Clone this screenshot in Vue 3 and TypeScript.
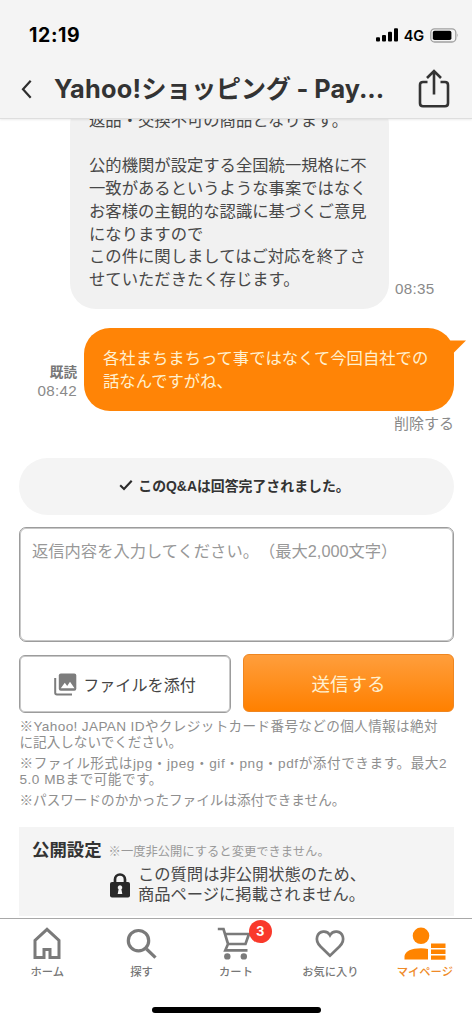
<script setup lang="ts">
interface NavItem {
  id: string
  label: string
  active?: boolean
  badge?: number
}

const answerLines: string[] = [
  '返品・交換不可の商品となります。',
  '',
  '公的機関が設定する全国統一規格に不',
  '一致があるというような事案ではなく',
  'お客様の主観的な認識に基づくご意見',
  'になりますので',
  'この件に関しましてはご対応を終了さ',
  'せていただきたく存じます。',
]

const replyLines: string[] = ['各社まちまちって事ではなくて今回自社での', '話なんですがね、']

const notes: string[][] = [
  ['※Yahoo! JAPAN IDやクレジットカード番号などの個人情報は絶対', 'に記入しないでください。'],
  ['※ファイル形式はjpg・jpeg・gif・png・pdfが添付できます。最大2', '5.0 MBまで可能です。'],
  ['※パスワードのかかったファイルは添付できません。'],
]

const navItems: NavItem[] = [
  { id: 'home', label: 'ホーム' },
  { id: 'search', label: '探す' },
  { id: 'cart', label: 'カート', badge: 3 },
  { id: 'favorite', label: 'お気に入り' },
  { id: 'mypage', label: 'マイページ', active: true },
]
</script>

<template>
  <div class="screen">
    <header class="header">
      <div class="status">
        <span class="clock">12:19</span>
        <div class="status-right">
          <svg class="signal" width="22" height="14" viewBox="0 0 22 14">
            <rect x="0" y="9.2" width="4" height="4.3" rx="1" />
            <rect x="6" y="7" width="4" height="6.5" rx="1" />
            <rect x="12" y="3.8" width="4" height="9.7" rx="1" />
            <rect x="18" y="0.3" width="4" height="13.2" rx="1" />
          </svg>
          <span class="network">4G</span>
          <svg class="battery" width="29" height="15" viewBox="0 0 29 15">
            <rect x="0.8" y="0.8" width="25" height="13.2" rx="3.8" fill="none" stroke="#a0a0a0" stroke-width="1.3" />
            <rect x="2.8" y="2.8" width="18.6" height="9.2" rx="1.8" />
            <path d="M27.3 5.2q1.7 2.2 0 4.4z" fill="#a0a0a0" />
          </svg>
        </div>
      </div>
      <div class="titlebar">
        <svg class="back" width="12" height="20" viewBox="0 0 12 20">
          <path d="M9.7 1.7 2 10.2l7.7 8.5" fill="none" stroke="#2e2e2e" stroke-width="2.2" />
        </svg>
        <h1 class="title"><span class="t-latin">Yahoo!</span><span class="t-kana">ショッピング</span><span class="t-tail"> - Pay...</span></h1>
        <svg class="share" width="32" height="40" viewBox="0 0 32 40">
          <g fill="none" stroke="#333" stroke-width="2.6">
            <path d="M9.5 13H5Q2 13 2 16V34.300q0 3 3 3H27q3 0 3-3V16q0-3-3-3h-4.500" />
            <path d="M16 25.500V2.500M9 9l7-7 7 7" />
          </g>
        </svg>
      </div>
    </header>

    <main class="content">
      <div class="row answer-row">
        <div class="bubble answer">
          <p v-for="(line, i) in answerLines" :key="i">{{ line }}</p>
        </div>
        <time class="time">08:35</time>
      </div>

      <div class="row reply-row">
        <div class="meta">
          <b>既読</b>
          <time class="time">08:42</time>
        </div>
        <div class="bubble reply">
          <p v-for="line in replyLines" :key="line">{{ line }}</p>
          <svg class="tail" width="20" height="15" viewBox="0 0 20 15"><path d="M0 .6H19L6.500 13 4 15z" /></svg>
        </div>
      </div>
      <div class="delete">削除する</div>

      <div class="done">
        <svg width="14" height="12" viewBox="0 0 14 12">
          <path d="M1.200 6.300 5 10 12.700 1.700" fill="none" stroke="#2b2b2b" stroke-width="2.1" />
        </svg>
        <span>このQ&amp;Aは回答完了されました。</span>
      </div>

      <div class="input">返信内容を入力してください。（最大2,000文字）</div>

      <div class="actions">
        <button class="btn attach">
          <svg width="23" height="23" viewBox="0 0 23 23">
            <path d="M1.200 5V19.800q0 1.700 1.700 1.700H18" fill="none" stroke="#7d7d7d" stroke-width="2" />
            <rect x="4.800" y="0.500" width="17.500" height="17.300" rx="2" fill="#7d7d7d" />
            <path d="M6.800 15.200 10.800 9.800 13.200 13 16 8.700 20.500 15.200z" fill="#fff" />
          </svg>
          <span>ファイルを添付</span>
        </button>
        <button class="btn send">送信する</button>
      </div>

      <div class="notes">
        <div v-for="(note, i) in notes" :key="i" class="note">
          <p v-for="(line, j) in note" :key="j" :class="`n${i}${j}`">{{ line }}</p>
        </div>
      </div>

      <section class="privacy">
        <div class="privacy-head">
          <h2>公開設定</h2>
          <small>※一度非公開にすると変更できません。</small>
        </div>
        <div class="privacy-body">
          <svg width="20" height="25" viewBox="0 0 20 25">
            <path d="M5 11V6.500a5 5 0 0 1 10 0V11" fill="none" stroke="#282828" stroke-width="2.700" />
            <rect x="0" y="9" width="20" height="15.500" rx="2" fill="#282828" />
            <path d="M10 12.200a2.300 2.300 0 0 1 1.400 4.100L12.300 21H7.700L8.600 16.300A2.300 2.300 0 0 1 10 12.200z" fill="#f4f4f4" />
          </svg>
          <div>
            <p>この質問は非公開状態のため、</p>
            <p>商品ページに掲載されません。</p>
          </div>
        </div>
      </section>
    </main>

    <nav class="nav">
      <div v-for="item in navItems" :key="item.id" class="nav-item" :class="{ active: item.active }">
        <svg v-if="item.id === 'home'" width="44" height="36" viewBox="0 0 44 36">
          <path d="M10 32.500V15.500L22 4.300 34 15.500V32.500H25V24.500H19V32.500Z" fill="none" stroke="#7a7a7a" stroke-width="3" />
        </svg>
        <svg v-else-if="item.id === 'search'" width="44" height="36" viewBox="0 0 44 36">
          <g fill="none" stroke="#7a7a7a" stroke-width="3.200">
            <circle cx="18.500" cy="15.700" r="10.200" />
            <path d="m26.500 24 9 8.700" />
          </g>
        </svg>
        <svg v-else-if="item.id === 'cart'" width="44" height="36" viewBox="0 0 44 36">
          <g fill="none" stroke="#7a7a7a" stroke-width="2.700">
            <path d="M3.800 4H9.500L14.500 20.500M11 9H35L31.500 19H14L11.300 25.300H33.500" />
          </g>
          <circle cx="13.300" cy="31.400" r="3.200" fill="#7a7a7a" />
          <circle cx="29.800" cy="31.400" r="3.200" fill="#7a7a7a" />
        </svg>
        <svg v-else-if="item.id === 'favorite'" width="44" height="36" viewBox="0 0 44 36">
          <path
            d="M22 30.700 12.500 21.500C8.800 17.800 8.500 14 9.200 11.600 11 5.500 19 4.800 22 10.200 25 4.800 33 5.500 34.800 11.600 35.500 14 35.200 17.800 31.500 21.500Z"
            fill="none" stroke="#7a7a7a" stroke-width="2.700"
          />
        </svg>
        <svg v-else width="44" height="36" viewBox="0 0 44 36">
          <g fill="#ff8400">
            <circle cx="18" cy="10.800" r="8.300" />
            <path d="M1.500 34.500V31Q3 23.500 18 23.200q4 0 7 .8V34.500Z" />
            <rect x="28" y="18.500" width="14.500" height="4.500" />
            <rect x="28" y="24.500" width="14.500" height="4.500" />
            <rect x="28" y="30.500" width="14.500" height="4.200" />
          </g>
        </svg>
        <span class="label">{{ item.label }}</span>
        <span v-if="item.badge" class="badge">{{ item.badge }}</span>
      </div>
    </nav>
    <div class="home-indicator"></div>
  </div>
</template>

<style scoped>
.screen {
  width: 472px;
  height: 1024px;
  display: flex;
  flex-direction: column;
  overflow: hidden;
  background: #fff;
  color: #484848;
  font-family: "Liberation Sans", "Noto Sans CJK JP", sans-serif;
  white-space: nowrap;
  text-spacing-trim: space-all;
}
p, h1, h2 { margin: 0; }
svg { display: block; flex: none; }
.header {
  flex: none;
  box-sizing: border-box;
  height: 119px;
  background: #f4f4f4;
  border-bottom: 1px solid #dedede;
  box-shadow: 0 1px 2px rgba(0, 0, 0, 0.08);
  position: relative;
  z-index: 1;
}
.status {
  height: 60px;
  padding: 10px 13px 0 29px;
  box-sizing: border-box;
  display: flex;
  align-items: center;
  justify-content: space-between;
  color: #000;
  font-family: Inter, sans-serif;
}
.clock { font-size: 19.5px; font-weight: 700; letter-spacing: 0.6px; }
.status-right { display: flex; align-items: center; gap: 6px; }
.network { font-size: 14.5px; font-weight: 600; letter-spacing: -0.1px; }
.titlebar {
  height: 58px;
  display: flex;
  align-items: center;
  padding: 0 22px 0 21px;
}
.title {
  flex: 1;
  margin-left: 21px;
  font: 700 25.3px/40px Inter, "Noto Sans CJK JP", sans-serif;
  color: #333;
  white-space: pre;
}
.t-latin { letter-spacing: 0.2px; }
.t-kana { letter-spacing: -0.4px; }
.share { margin-top: -1px; }

.content { flex: none; height: 799px; overflow: hidden; }
.row { display: flex; align-items: flex-end; }
.bubble { box-sizing: border-box; font-size: 16.33px; line-height: 22.7px; }
.bubble p { min-height: 22.7px; }
.answer-row { margin-top: -20px; padding-left: 70px; gap: 6px; }
.answer {
  width: 319px;
  height: 210px;
  padding: 10px 19px 0;
  background: #f1f1f1;
  border-radius: 26px;
}
.time { font-size: 15.2px; line-height: 18px; color: #8a8a8a; letter-spacing: 0.3px; }
.answer-row .time { margin-bottom: 11px; }
.reply-row { margin-top: 19px; padding-left: 19px; align-items: center; }
.meta {
  width: 58px;
  margin-right: 7px;
  padding-top: 23px;
  text-align: right;
  display: flex;
  flex-direction: column;
}
.meta b { font-size: 13.6px; line-height: 19px; color: #777; }
.reply {
  position: relative;
  width: 370px;
  height: 83px;
  padding: 19px 19px 0;
  background: #ff8406;
  border-radius: 26px;
  color: #fff0cf;
}
.tail { position: absolute; left: 363px; top: 12px; fill: #ff8406; }
.delete {
  margin: 3px 18px 0 0;
  text-align: right;
  font-size: 15px;
  line-height: 19px;
  color: #8a8a8a;
}
.done {
  box-sizing: border-box;
  margin: 25px 18px 0 19px;
  height: 57px;
  padding: 0 4px 3px 0;
  border-radius: 29px;
  background: #f4f4f4;
  display: flex;
  align-items: center;
  justify-content: center;
  gap: 5px;
  font-size: 13.9px;
  font-weight: 700;
  color: #333;
}
.input {
  box-sizing: border-box;
  margin: 12px 18px 0 19px;
  height: 115px;
  padding: 12px 12px;
  border: 1px solid #9c9c9c;
  box-shadow: inset 0 0 0 1px #c8c8c8;
  border-radius: 7px;
  font-size: 16.3px;
  line-height: 22px;
  color: #989898;
}
.actions {
  margin: 12px 18px 0 19px;
  display: flex;
  align-items: flex-start;
  gap: 12px;
}
.btn {
  box-sizing: border-box;
  height: 58px;
  padding: 0;
  display: flex;
  align-items: center;
  justify-content: center;
  border-radius: 6px;
  font-family: inherit;
}
.attach {
  width: 212px;
  margin-top: 1px;
  gap: 6px;
  border: 1px solid #9c9c9c;
  box-shadow: inset 0 0 0 1px #c8c8c8;
  background: #fff;
  color: #444;
  font-size: 16.1px;
}
.send {
  width: 211px;
  border: 1px solid #ef8620;
  background: linear-gradient(#ff9e3c, #ff8000);
  color: #fff0cf;
  font-size: 18.5px;
}
.notes {
  margin: 6px 0 0 19.500px;
  font-size: 13.6px;
  line-height: 16.4px;
  color: #8e8e8e;
}
.note { margin-bottom: 4.2px; }
.n00 { letter-spacing: 0.36px; }
.n10 { letter-spacing: 0.58px; }
.n11 { letter-spacing: 0.5px; }
.privacy {
  margin: 18px 18px 0 19px;
  height: 89px;
  background: #f4f4f4;
  box-sizing: border-box;
  padding: 12px 13px 0;
}
.privacy-head { display: flex; align-items: center; gap: 7px; height: 22px; }
.privacy-head h2 { font-size: 17.4px; line-height: 22px; color: #333; }
.privacy-head small { font-size: 12.3px; line-height: 18px; color: #999; padding-top: 3px; }
.privacy-body {
  display: flex;
  align-items: center;
  gap: 8px;
  padding-left: 78px;
  margin-top: 4px;
  font-size: 16.3px;
  line-height: 19.4px;
}
.privacy-body svg { margin-top: 1px; }

.nav {
  flex: none;
  box-sizing: border-box;
  height: 87px;
  border-top: 1px solid #a8a8a8;
  display: flex;
  background: #fff;
}
.nav-item {
  flex: 1;
  position: relative;
  display: flex;
  flex-direction: column;
  align-items: center;
  padding-top: 6px;
  color: #777;
}
.nav-item svg { margin-bottom: 3px; }
.label { font-size: 11.3px; line-height: 16px; font-weight: 500; }
.nav-item.active { color: #ef8a28; }
.badge {
  position: absolute;
  left: 60px;
  top: 1px;
  width: 23px;
  height: 23px;
  border-radius: 50%;
  background: #f9392b;
  color: #fff;
  font: 700 13px/23px Inter, sans-serif;
  text-align: center;
}
.home-indicator {
  width: 169px;
  height: 6px;
  margin: 2px auto 0;
  border-radius: 3px;
  background: #000;
}
</style>

<style>
body { background: #fff; }
</style>
